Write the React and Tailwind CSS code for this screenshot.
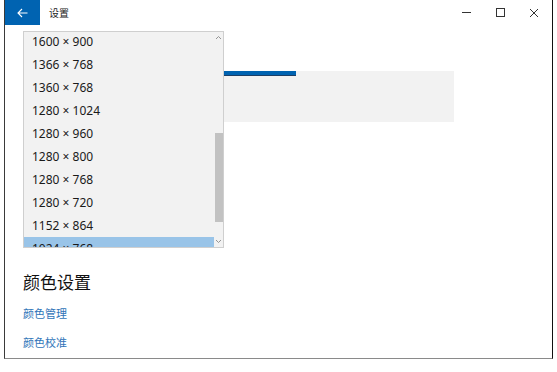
import React from 'react';

const resolutions = [
    '1600 × 900',
    '1366 × 768',
    '1360 × 768',
    '1280 × 1024',
    '1280 × 960',
    '1280 × 800',
    '1280 × 768',
    '1280 × 720',
    '1152 × 864',
    '1024 × 768',
];

export default function App() {
    return (
        <div className="relative w-[557px] h-[372px] bg-white overflow-hidden font-['Noto_Sans','Noto_Sans_CJK_SC',sans-serif] text-[#1a1a1a]">
            <div className="ml-[4px] w-[549px] h-[359px] border-l border-l-[#3a3a3a] border-r border-r-[#111] border-b border-b-[#8a8a8a] flex flex-col">
                {/* title bar */}
                <div className="h-[25px] flex items-center shrink-0">
                    <div className="w-[35px] h-[25px] bg-[#0063b1] flex items-center justify-center">
                        <svg width="11" height="10" viewBox="0 0 11 10" fill="none" stroke="white" strokeWidth="1.1">
                            <path d="M10.5 5H1M5 1 1 5l4 4" />
                        </svg>
                    </div>
                    <span className="ml-[9px] text-[10px] leading-none text-[#222]">设置</span>
                    <div className="ml-auto flex items-center h-full">
                        <div className="w-[34px] h-full flex items-center justify-center">
                            <div className="w-[9px] h-px bg-[#333]" />
                        </div>
                        <div className="w-[34px] h-full flex items-center justify-center">
                            <div className="w-[9px] h-[9px] border border-[#333]" />
                        </div>
                        <div className="w-[34px] h-full flex items-center justify-center mr-[1px]">
                            <svg width="10" height="10" viewBox="0 0 10 10" stroke="#333" strokeWidth="1">
                                <path d="M1 1l8 8M9 1 1 9" />
                            </svg>
                        </div>
                    </div>
                </div>

                {/* content */}
                <div className="pl-[18px] flex flex-col">
                    <div className="mt-[46px] w-[431px] h-[51px] bg-[#f2f2f2]">
                        <div className="w-[273px] h-[5px] bg-[#0063b1] border-b border-[#1d3f66]" />
                    </div>

                    <div className="mt-[150px] text-[17px] leading-[22px] text-[#111]">颜色设置</div>
                    <div className="mt-[13px] text-[11px] leading-[14px] text-[#2f74b8]">颜色管理</div>
                    <div className="mt-[15px] text-[11px] leading-[14px] text-[#2f74b8]">颜色校准</div>
                </div>
            </div>

            {/* dropdown list */}
            <div className="absolute left-[23px] top-[31px] w-[201px] h-[217px] bg-[#f2f2f2] border border-[#cfcfcf] overflow-hidden">
                <div className="-mt-[2px] mr-[9px]">
                    {resolutions.map((r, i) => (
                        <div
                            key={r}
                            className={`h-[23px] flex items-center pl-[8px] text-[12px] ${i === 9 ? 'bg-[#99c4e8]' : ''}`}
                        >
                            {r}
                        </div>
                    ))}
                </div>
                <div className="absolute right-0 top-0 bottom-0 w-[9px] flex flex-col items-center">
                    <svg className="mt-[3px]" width="7" height="5" viewBox="0 0 7 5" fill="none" stroke="#8a8a8a" strokeWidth="0.9">
                        <path d="M1 4 3.5 1.5 6 4" />
                    </svg>
                    <div className="mt-[93px] w-[8px] h-[89px] bg-[#c2c2c2]" />
                    <svg className="mt-auto mb-[3px]" width="7" height="5" viewBox="0 0 7 5" fill="none" stroke="#8a8a8a" strokeWidth="0.9">
                        <path d="M1 1 3.5 3.5 6 1" />
                    </svg>
                </div>
            </div>
        </div>
    );
}
